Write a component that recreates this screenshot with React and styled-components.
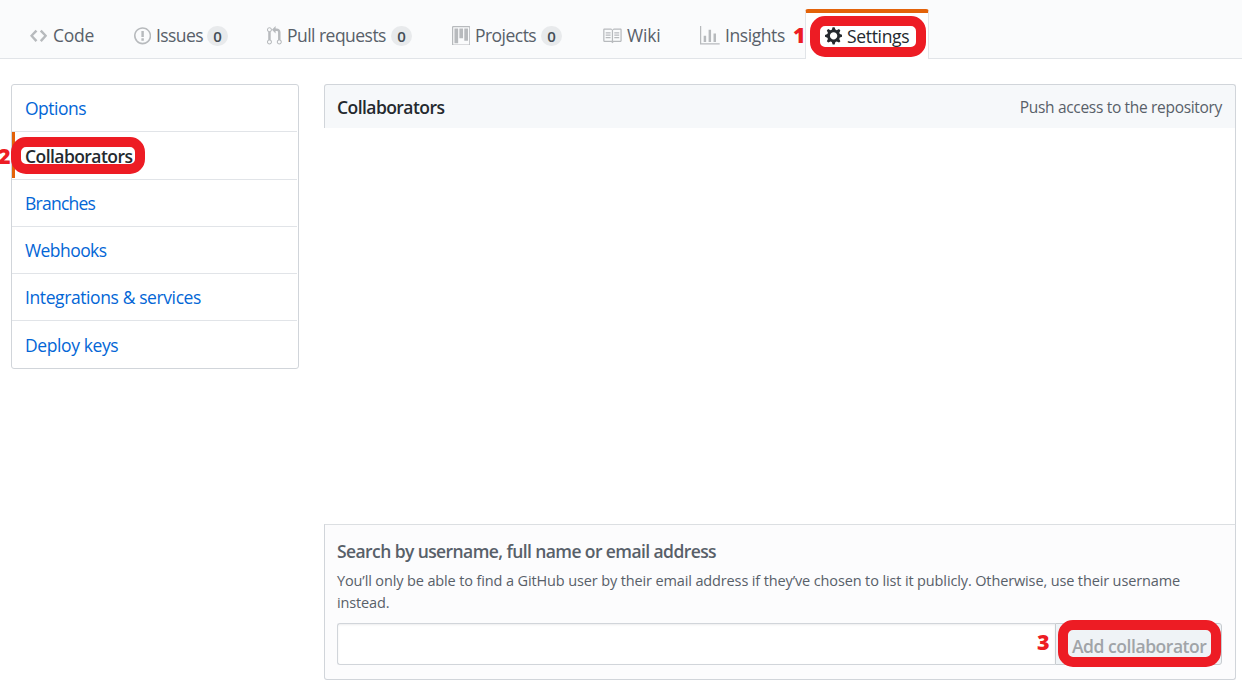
import React from "react";
import styled, { createGlobalStyle } from "styled-components";

const Global = createGlobalStyle`
  *, *::before, *::after { box-sizing: border-box; }
  body {
    margin: 0;
    background: #fff;
    color: #24292e;
    font-family: "Open Sans", "Noto Sans", sans-serif;
    font-size: 17.5px;
    overflow: hidden;
  }
  h2, h3, p { margin: 0; }
`;

const Page = styled.div`
  width: 1242px;
  height: 694px;
`;

const Nav = styled.nav`
  display: flex;
  align-items: flex-end;
  height: 59px;
  padding-left: 30px;
  background: #fafbfc;
  border-bottom: 1px solid #e1e4e8;
`;

const NavItem = styled.a`
  flex: none;
  display: flex;
  align-items: center;
  width: ${(p) => p.$width}px;
  height: 45px;
  color: #586069;
`;

const ActiveTab = styled(NavItem)`
  position: relative;
  height: 50px;
  margin-bottom: -1px;
  padding-left: 19px;
  background: #fff;
  color: #24292e;
  border: 1px solid #e1e4e8;
  border-top: 4px solid #e36209;
  border-bottom: 0;
  border-radius: 3px 3px 0 0;
`;

const IconSlot = styled.span`
  flex: none;
  display: flex;
  width: ${(p) => p.$width}px;
  color: ${(p) => (p.$dark ? "#24292e" : "#b7babd")};
  svg { display: block; fill: currentColor; }
`;

const Label = styled.span`
  flex: none;
  width: ${(p) => p.$width}px;
  height: 25px;
  line-height: 24px;
  white-space: nowrap;
  letter-spacing: ${(p) => p.$track || 0}px;
`;

const Counter = styled.span`
  display: flex;
  align-items: center;
  justify-content: center;
  width: 21px;
  height: 20px;
  border-radius: 10px;
  background: #e8eaec;
  color: #444d56;
  font-size: 15px;
  font-weight: 600;
  line-height: 20px;
`;

const Ring = styled.span`
  position: absolute;
  left: ${(p) => p.$x}px;
  top: ${(p) => p.$y}px;
  width: ${(p) => p.$w}px;
  height: ${(p) => p.$h}px;
  border: 10px solid #ed1c24;
  border-radius: 15px;
  pointer-events: none;
`;

const Step = styled.span`
  position: absolute;
  left: ${(p) => p.$x}px;
  top: ${(p) => p.$y}px;
  color: #ed1c24;
  font-size: 21.5px;
  font-weight: 800;
  line-height: 24px;
`;

const Content = styled.main`
  display: grid;
  grid-template-columns: 288px 912px;
  column-gap: 25px;
  align-items: start;
  padding: 25px 0 0 11px;
`;

const Menu = styled.aside`
  display: grid;
  grid-template-rows: 47px 48px 47px 47px 47px 47px;
  height: 285px;
  padding-right: 1px;
  border: 1px solid #d1d5da;
  border-radius: 3px;
`;

const MenuItem = styled.a`
  position: relative;
  display: flex;
  align-items: center;
  padding: 0 0 0 13px;
  color: #0366d6;
  letter-spacing: ${(p) => p.$track}px;
  border-bottom: 1px solid #e1e4e8;
  &:last-child { border-bottom: 0; }
`;

const CurrentItem = styled(MenuItem)`
  color: #24292e;
  font-weight: 600;
  &::before {
    content: "";
    position: absolute;
    left: 0;
    top: 0;
    width: 3px;
    height: 46px;
    background: #e36209;
  }
`;

const MenuText = styled.span`
  position: relative;
  z-index: 1;
`;

const Panel = styled.section`
  display: grid;
  grid-template-rows: 44px 396px 156px;
`;

const PanelHeader = styled.header`
  display: flex;
  align-items: center;
  justify-content: space-between;
  padding: 1px 13px 0 12px;
  background: #f6f8fa;
  border: 1px solid #d1d5da;
  border-bottom: 0;
  border-radius: 3px 3px 0 0;
`;

const PanelTitle = styled.h2`
  font-size: 17.5px;
  font-weight: 600;
  letter-spacing: -0.56px;
`;

const Access = styled.span`
  color: #586069;
  font-size: 15.5px;
  letter-spacing: -0.32px;
`;

const EmptyList = styled.div`
  border-right: 1px solid #d1d5da;
`;

const SearchForm = styled.form`
  padding: 15px 13px 0 12px;
  background: #fcfcfd;
  border: 1px solid #d1d5da;
  border-top-color: #dcdfe2;
  border-radius: 0 0 3px 3px;
`;

const FormTitle = styled.h3`
  color: #586069;
  font-size: 17.5px;
  font-weight: 600;
  line-height: 23px;
  letter-spacing: -0.59px;
`;

const Hint = styled.p`
  margin-top: 7px;
  color: #586069;
  font-size: 14.5px;
  line-height: 22px;
  letter-spacing: -0.13px;
`;

const FieldRow = styled.div`
  position: relative;
  display: flex;
  width: 885px;
  height: 42px;
  margin-top: 9px;
`;

const Field = styled.input`
  width: 718px;
  padding: 0 10px;
  background: #fff;
  border: 1px solid #d1d5da;
  border-right: 0;
  border-radius: 3px 0 0 3px;
  box-shadow: inset 0 1px 2px rgba(27, 31, 35, 0.075);
  outline: 0;
`;

const AddButton = styled.button`
  width: 167px;
  padding: 3px 0 0 16px;
  text-align: left;
  white-space: nowrap;
  background: #eff3f6;
  color: #a0a4a8;
  border: 1px solid #c8ccd0;
  border-radius: 0 3px 3px 0;
  font: 600 17.5px "Open Sans", "Noto Sans", sans-serif;
  letter-spacing: -0.45px;
`;

const paths = {
  code: [14, "M9.5 3L8 4.5 11.5 8 8 11.5 9.5 13 14 8 9.5 3zm-5 0L0 8l4.5 5L6 11.5 2.5 8 6 4.5 4.5 3z"],
  issue: [14, "M7 2.3c3.14 0 5.7 2.56 5.7 5.7s-2.56 5.7-5.7 5.7A5.71 5.71 0 0 1 1.3 8c0-3.14 2.56-5.7 5.7-5.7zM7 1C3.14 1 0 4.14 0 8s3.14 7 7 7 7-3.14 7-7-3.14-7-7-7zm1 3H6v5h2V4zm0 6H6v2h2v-2z"],
  pull: [12, "M11 11.28V5c-.03-.78-.34-1.47-.94-2.06C9.46 2.35 8.78 2.03 8 2H7V0L4 3l3 3V4h1c.27.02.48.11.69.31.21.2.3.42.31.69v6.28A1.993 1.993 0 0 0 10 15a1.993 1.993 0 0 0 1-3.72zm-1 2.92c-.66 0-1.2-.55-1.2-1.2 0-.65.55-1.2 1.2-1.2.65 0 1.2.55 1.2 1.2 0 .65-.55 1.2-1.2 1.2zM4 3c0-1.11-.89-2-2-2a1.993 1.993 0 0 0-1 3.72v6.56A1.993 1.993 0 0 0 2 15a1.993 1.993 0 0 0 1-3.72V4.72c.59-.34 1-.98 1-1.72zm-.8 10c0 .66-.55 1.2-1.2 1.2-.65 0-1.2-.55-1.2-1.2 0-.65.55-1.2 1.2-1.2.65 0 1.2.55 1.2 1.2zM2 4.2C1.34 4.2.8 3.65.8 3c0-.65.55-1.2 1.2-1.2.65 0 1.2.55 1.2 1.2 0 .65-.55 1.2-1.2 1.2z"],
  project: [15, "M10 12h3V2h-3v10zm-4-2h3V2H6v8zm-4 4h3V2H2v12zm-1 1h13V1H1v14zM14 0H1a1 1 0 0 0-1 1v14a1 1 0 0 0 1 1h13a1 1 0 0 0 1-1V1a1 1 0 0 0-1-1z"],
  book: [16, "M3 5h4v1H3V5zm0 3h4V7H3v1zm0 2h4V9H3v1zm11-5h-4v1h4V5zm0 2h-4v1h4V7zm0 2h-4v1h4V9zm2-6v9c0 .55-.45 1-1 1H9.5l-1 1-1-1H2c-.55 0-1-.45-1-1V3c0-.55.45-1 1-1h5.5l1 1 1-1H15c.55 0 1 .45 1 1zm-8 .5L7.5 3H2v9h6V3.5zm7-.5H9.5l-.5.5V12h6V3z"],
  graph: [16, "M16 14v1H0V0h1v14h15zM5 13H3V8h2v5zm4 0H7V3h2v10zm4 0h-2V6h2v7z"],
  gear: [14, "M14 8.77v-1.6l-1.94-.64-.45-1.09.88-1.84-1.13-1.13-1.81.91-1.09-.45-.69-1.92h-1.6l-.63 1.94-1.11.45-1.84-.88-1.13 1.13.91 1.81-.45 1.09L0 7.23v1.59l1.94.64.45 1.09-.88 1.84 1.13 1.13 1.81-.91 1.09.45.69 1.92h1.59l.63-1.94 1.11-.45 1.84.88 1.13-1.13-.92-1.81.47-1.09L14 8.75v.02zM7 11c-1.66 0-3-1.34-3-3s1.34-3 3-3 3 1.34 3 3-1.34 3-3 3z"],
};

function Icon({ name }) {
  const [w, d] = paths[name];
  return (
    <svg width={w * 1.23} height={16 * 1.23} viewBox={`0 0 ${w} 16`} fillRule="evenodd" aria-hidden="true">
      <path d={d} />
    </svg>
  );
}

const tabs = [
  { icon: "code", text: "Code", width: 104, slot: 23, label: 41, track: -0.25 },
  { icon: "issue", text: "Issues", width: 133, slot: 22, label: 51, track: -0.6, count: 0 },
  { icon: "pull", text: "Pull requests", width: 185, slot: 20, label: 104, track: -0.53, count: 0 },
  { icon: "project", text: "Projects", width: 150, slot: 23, label: 66, track: -0.53, count: 0 },
  { icon: "book", text: "Wiki", width: 98, slot: 25, label: 34, track: -0.2 },
  { icon: "graph", text: "Insights", width: 105, slot: 25, label: 61, track: -0.42 },
];

export default function App() {
  return (
    <Page>
      <Global />
      <Nav>
        {tabs.map((t) => (
          <NavItem key={t.text} $width={t.width}>
            <IconSlot $width={t.slot}><Icon name={t.icon} /></IconSlot>
            <Label $width={t.label} $track={t.track}>{t.text}</Label>
            {t.count !== undefined && <Counter>{t.count}</Counter>}
          </NavItem>
        ))}
        <ActiveTab $width={124}>
          <IconSlot $width={22} $dark><Icon name="gear" /></IconSlot>
          <Label $width={63} $track={-0.33}>Settings</Label>
          <Ring $x={4} $y={3} $w={116} $h={41} />
          <Step $x={-13} $y={10}>1</Step>
        </ActiveTab>
      </Nav>
      <Content>
        <Menu>
          <MenuItem $track={-0.5}>Options</MenuItem>
          <CurrentItem $track={-0.56}>
            <MenuText>Collaborators</MenuText>
            <Ring $x={-1} $y={5} $w={134} $h={37} />
            <Step $x={-14} $y={12}>2</Step>
          </CurrentItem>
          <MenuItem $track={-0.75}>Branches</MenuItem>
          <MenuItem $track={-0.56}>Webhooks</MenuItem>
          <MenuItem $track={-0.4}>Integrations &amp; services</MenuItem>
          <MenuItem $track={-0.4}>Deploy keys</MenuItem>
        </Menu>
        <Panel>
          <PanelHeader>
            <PanelTitle>Collaborators</PanelTitle>
            <Access>Push access to the repository</Access>
          </PanelHeader>
          <EmptyList />
          <SearchForm>
            <FormTitle>Search by username, full name or email address</FormTitle>
            <Hint>
              You’ll only be able to find a GitHub user by their email address if they’ve chosen to list it publicly. Otherwise, use their username
              <br />
              instead.
            </Hint>
            <FieldRow>
              <Field aria-label="Search by username, full name or email address" />
              <AddButton type="button" disabled>Add collaborator</AddButton>
              <Ring $x={721} $y={-3} $w={163} $h={47} />
              <Step $x={700} $y={7}>3</Step>
            </FieldRow>
          </SearchForm>
        </Panel>
      </Content>
    </Page>
  );
}
